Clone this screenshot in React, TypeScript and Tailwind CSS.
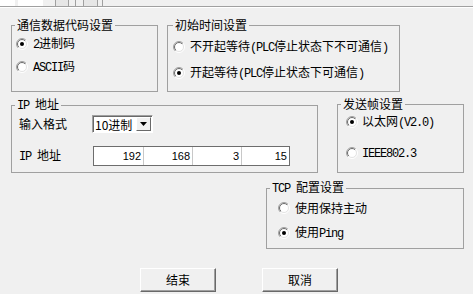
import React from "react";

const mono = "font-['Liberation_Mono',monospace] text-[12px] tracking-[-1.2px]";

function A({ children }: { children: React.ReactNode }) {
  return <span className={mono}>{children}</span>;
}

function Radio({ checked }: { checked?: boolean }) {
  return (
    <svg width="12" height="12" viewBox="0 0 12 12" className="shrink-0">
      <defs>
        <linearGradient id="ro" x1="0" y1="0" x2="1" y2="1">
          <stop offset="0.5" stopColor="#a0a0a0" />
          <stop offset="0.5" stopColor="#ffffff" />
        </linearGradient>
        <linearGradient id="ri" x1="0" y1="0" x2="1" y2="1">
          <stop offset="0.5" stopColor="#696969" />
          <stop offset="0.5" stopColor="#e3e3e3" />
        </linearGradient>
      </defs>
      <circle cx="6" cy="6" r="5.5" fill="none" stroke="url(#ro)" strokeWidth="1" />
      <circle cx="6" cy="6" r="4.5" fill="#ffffff" stroke="url(#ri)" strokeWidth="1" />
      {checked && <circle cx="6" cy="6" r="2" fill="#000" />}
    </svg>
  );
}

function Option({ checked, gap, children }: { checked?: boolean; gap: string; children: React.ReactNode }) {
  return (
    <div className={`flex h-[16px] items-center ${gap}`}>
      <Radio checked={checked} />
      <span className="whitespace-nowrap">{children}</span>
    </div>
  );
}

function Group({
  title,
  className,
  legend,
  children,
}: {
  title: React.ReactNode;
  className: string;
  legend: string;
  children: React.ReactNode;
}) {
  return (
    <fieldset className={`shrink-0 border border-[#a0a0a0] ${className}`}>
      <legend className={`px-[2px] leading-[14px] whitespace-nowrap ${legend}`}>{title}</legend>
      {children}
    </fieldset>
  );
}

function Button({ children, className }: { children: React.ReactNode; className: string }) {
  return (
    <button
      className={`h-[24px] w-[76px] border border-b-[#696969] border-l-white border-r-[#696969] border-t-white bg-[#f0f0f0] leading-[14px] shadow-[inset_-1px_-1px_0_#a0a0a0] ${className}`}
    >
      {children}
    </button>
  );
}

function IpBox({ parts }: { parts: number[] }) {
  const widths = ["w-[49px]", "w-[48px]", "w-[48px]", "w-[47px]"];
  return (
    <div className="ml-[1px] flex h-[20px] w-[197px] border border-[#6d6d6d] bg-white font-['Liberation_Sans',sans-serif] text-[11px]">
      {parts.map((p, i) => (
        <React.Fragment key={i}>
          {i > 0 && <div className="w-px bg-[#c8c8c8]" />}
          <div className={`${widths[i]} flex items-center justify-end pr-[2px]`}>{p}</div>
        </React.Fragment>
      ))}
    </div>
  );
}

export default function App() {
  return (
    <div className="h-[294px] w-[473px] overflow-hidden bg-[#f0f0f0] font-['Noto_Sans_CJK_SC',sans-serif] text-[12px] leading-[14px] text-black">
      {/* tab strip */}
      <div className="flex h-[6px]">
        <div className="w-[15px] bg-white" />
        <div className="ml-[3px] w-[25px] bg-white" />
        <div className="ml-[12px] w-[14px] border-x border-[#a0a0a0] bg-[#e6e6e6]" />
        <div className="ml-[6px] w-px bg-[#a0a0a0]" />
        <div className="ml-[7px] w-[15px] border-x border-[#a0a0a0] bg-[#e6e6e6]" />
        <div className="ml-[4px] w-px bg-[#a0a0a0]" />
      </div>
      <div className="h-px bg-[#a0a0a0]" />
      <div className="h-px bg-white" />

      <div className="mt-[10px] flex">
        <Group title="通信数据代码设置" legend="ml-[3px]" className="ml-[11px] h-[74px] w-[147px]">
          <div className="flex flex-col gap-[7px] pl-[4px] pt-[4px]">
            <Option checked gap="gap-[5px]">
              <A>2</A>进制码
            </Option>
            <Option gap="gap-[5px]">
              <A>ASCII</A>码
            </Option>
          </div>
        </Group>
        <Group title="初始时间设置" legend="ml-[5px]" className="ml-[9px] h-[74px] w-[233px]">
          <div className="flex flex-col gap-[10px] pl-[5px] pt-[7px]">
            <Option gap="gap-[5px]">
              不开起等待<A>(PLC</A>停止状态下不可通信<A>)</A>
            </Option>
            <Option checked gap="gap-[5px]">
              开起等待<A>(PLC</A>停止状态下可通信<A>)</A>
            </Option>
          </div>
        </Group>
      </div>

      <div className="mt-[5px] flex">
        <Group
          title={
            <>
              <A>IP </A>地址
            </>
          }
          legend="ml-[3px]"
          className="ml-[11px] h-[76px] w-[307px]"
        >
          <div className="pl-[7px] pt-[2px]">
            <div className="flex h-[18px] items-center">
              <span className="w-[73px]">输入格式</span>
              <div className="flex h-[18px] w-[61px] items-center border border-b-white border-l-[#a0a0a0] border-r-white border-t-[#a0a0a0] bg-white shadow-[inset_1px_1px_0_#696969]">
                <span className="ml-[2px] flex-1 pt-px">10进制</span>
                <div className="mr-px flex h-[14px] w-[15px] items-center justify-center border border-b-[#696969] border-l-white border-r-[#696969] border-t-white bg-[#f0f0f0]">
                  <svg width="7" height="4" viewBox="0 0 7 4">
                    <path d="M0 0h7L3.5 4z" fill="#000" />
                  </svg>
                </div>
              </div>
            </div>
            <div className="mt-[13px] flex h-[20px] items-center">
              <span className="w-[73px]">
                <A>IP </A>地址
              </span>
              <IpBox parts={[192, 168, 3, 15]} />
            </div>
          </div>
        </Group>
        <Group title="发送帧设置" legend="ml-[3px]" className="ml-[19px] h-[76px] w-[127px]">
          <div className="flex flex-col gap-[15px] pl-[8px] pt-[3px]">
            <Option checked gap="gap-[4px]">
              以太网<A>(V2.0)</A>
            </Option>
            <Option gap="gap-[4px]">
              <A>IEEE802.3</A>
            </Option>
          </div>
        </Group>
      </div>

      <div className="mt-[7px] flex">
        <Group
          title={
            <>
              <A>TCP </A>配置设置
            </>
          }
          legend="ml-[3px]"
          className="ml-[266px] h-[69px] w-[198px]"
        >
          <div className="flex flex-col gap-[9px] pl-[11px] pt-[4px]">
            <Option gap="gap-[5px]">使用保持主动</Option>
            <Option checked gap="gap-[5px]">
              使用<A>Ping</A>
            </Option>
          </div>
        </Group>
      </div>

      <div className="mt-[19px] flex">
        <Button className="ml-[140px]">结束</Button>
        <Button className="ml-[46px]">取消</Button>
      </div>
    </div>
  );
}
